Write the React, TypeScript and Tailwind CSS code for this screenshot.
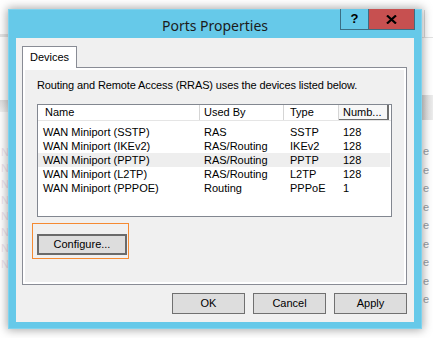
import React from 'react';

interface PortRow {
  name: string;
  usedBy: string;
  type: string;
  count: string;
  hot?: boolean;
}

const rows: PortRow[] = [
  { name: 'WAN Miniport (SSTP)', usedBy: 'RAS', type: 'SSTP', count: '128' },
  { name: 'WAN Miniport (IKEv2)', usedBy: 'RAS/Routing', type: 'IKEv2', count: '128' },
  { name: 'WAN Miniport (PPTP)', usedBy: 'RAS/Routing', type: 'PPTP', count: '128', hot: true },
  { name: 'WAN Miniport (L2TP)', usedBy: 'RAS/Routing', type: 'L2TP', count: '128' },
  { name: 'WAN Miniport (PPPOE)', usedBy: 'Routing', type: 'PPPoE', count: '1' },
];

const DialogButton = ({ label }: { label: string }) => (
  <button className="w-[73px] h-[21px] border border-[#707070] bg-[#dddddd] text-[11px] leading-none text-black">
    {label}
  </button>
);

const Desktop = () => (
  <>
    {/* bits of the window behind, left edge */}
    <div className="absolute left-0 top-[34px] w-[8px] h-[3px] bg-[#e4e4e4]" />
    <div className="absolute left-0 top-[100px] w-[8px] h-[12px] bg-gradient-to-b from-[#dedede] to-[#f2f2f2]" />
    <div className="absolute left-[1px] top-[144px] flex flex-col text-[11px] leading-[16px] text-[#efe4ee]">
      {['N', 'N', 'N', 'N', 'N', 'N', 'N', 'N'].map((c, i) => (
        <span key={i}>{c}</span>
      ))}
    </div>
    {/* bits of the window behind, right edge */}
    <div className="absolute left-[424px] top-[10px] w-px h-[27px] bg-[#dcdcdc]" />
    <div className="absolute left-[422px] top-[37px] w-[11px] h-px bg-[#e2e2e2]" />
    <div className="absolute left-[422px] top-[95px] w-[11px] h-[25px] bg-gradient-to-r from-[#d8d8d8] to-[#ededed]" />
    <div className="absolute left-[423px] top-[142px] flex flex-col text-[11px] leading-[18.5px] text-[#9aa0a6]">
      {['e', 'e', 'e', 'e', 'e', 'e', 'e', 'e', 'e'].map((c, i) => (
        <span key={i}>{c}</span>
      ))}
    </div>
  </>
);

const App = () => {
  return (
    <div className="relative w-[433px] h-[338px] bg-white overflow-hidden font-['Liberation_Sans',Arial,sans-serif]">
      <Desktop />

      <div className="absolute left-[8px] top-[9px] w-[414px] h-[320px] flex flex-col bg-[#66c9e9] border border-[#7fd3ee] shadow-[0_0_9px_1px_rgba(0,0,0,0.35)]">
        {/* title bar */}
        <div className="relative h-[28px] flex items-center justify-center">
          <span className="font-['Noto_Sans',sans-serif] text-[14px] text-[#1b1b1b] pt-[2px]">Ports Properties</span>
          <div className="absolute top-[-1px] right-[6px] flex">
            <div className="w-[29px] h-[21px] flex items-center justify-center border border-t-0 border-[#3b6e84] bg-[#66c9e9] text-[13px] font-bold text-black">
              ?
            </div>
            <div className="w-[46px] h-[21px] flex items-center justify-center border border-t-0 border-l-0 border-[#3b6e84] bg-[#c75050]">
              <svg width="11" height="9" viewBox="0 0 11 9">
                <path d="M1 0.5 L10 8.5 M10 0.5 L1 8.5" stroke="#000" strokeWidth="2.2" />
              </svg>
            </div>
          </div>
        </div>

        {/* client area */}
        <div className="mx-[7px] mb-[6px] flex-1 bg-[#f0f0f0] pl-[6px] pr-[7px] pt-[8px] flex flex-col">
          <div className="flex">
            <div className="w-[55px] h-[22px] -mb-px relative z-10 border border-b-0 border-[#898c95] bg-white flex items-center justify-center text-[11px] text-black">
              Devices
            </div>
          </div>

          <div className="w-[385px] h-[218px] border border-[#898c95] bg-white p-[2px]">
            <div className="h-full bg-[#f0f0f0] px-[12px] pt-[8px] flex flex-col">
              <p className="text-[11px] leading-[14px] tracking-[-0.12px] text-black">
                Routing and Remote Access (RRAS) uses the devices listed below.
              </p>

              {/* list view */}
              <div className="mt-[12px] w-[355px] h-[113px] border border-[#828790] bg-white flex flex-col">
                <div className="flex h-[16px] border-b border-[#e5e5e5] text-[11px] text-black">
                  <div className="w-[162px] pl-[7px] flex items-center border-r border-[#d5d5d5]">Name</div>
                  <div className="w-[84px] pl-[4px] flex items-center border-r border-[#d5d5d5]">Used By</div>
                  <div className="w-[55px] pl-[6px] flex items-center border-r border-[#d5d5d5]">Type</div>
                  <div className="w-[50px] pl-[4px] flex items-center border-r-2 border-b border-[#6e6e6e] bg-[#f7f7f7]">Numb...</div>
                </div>
                <div className="pt-[4px] flex flex-col">
                  {rows.map((r) => (
                    <div
                      key={r.name}
                      className={`flex h-[14px] w-[352px] items-center text-[11px] text-black ${r.hot ? 'bg-[#eeeeee]' : ''}`}
                    >
                      <span className="w-[162px] pl-[5px]">{r.name}</span>
                      <span className="w-[84px] pl-[4px]">{r.usedBy}</span>
                      <span className="w-[55px] pl-[6px]">{r.type}</span>
                      <span className="w-[50px] pl-[4px]">{r.count}</span>
                    </div>
                  ))}
                </div>
              </div>

              {/* highlighted Configure button */}
              <div className="mt-[6px] -ml-[5px] w-[97px] h-[36px] border border-[#f58a32] pl-[4px] pt-[7px]">
                <button className="w-[90px] h-[21px] border-2 border-[#6a6a6a] bg-[#dddddd] text-[11px] leading-none text-black">
                  Configure...
                </button>
              </div>
            </div>
          </div>

          <div className="mt-[8px] flex justify-end gap-[8px]">
            <DialogButton label="OK" />
            <DialogButton label="Cancel" />
            <DialogButton label="Apply" />
          </div>
        </div>
      </div>
    </div>
  );
};

export default App;
